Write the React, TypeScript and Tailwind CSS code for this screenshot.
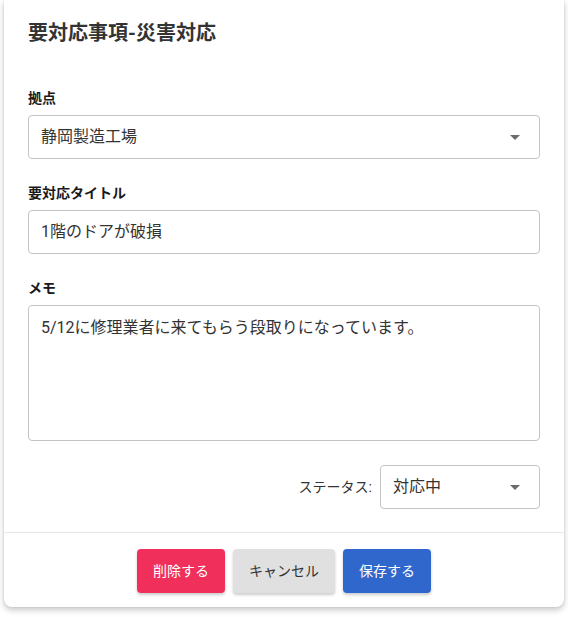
import React from 'react';

function Caret() {
  return (
    <svg width="10" height="5" viewBox="0 0 10 5" className="shrink-0">
      <path d="M0 0 L10 0 L5 5 Z" fill="#6b6b6b" />
    </svg>
  );
}

function SelectBox({ value, className }: { value: string; className?: string }) {
  return (
    <div
      className={`flex items-center justify-between h-[44px] border border-[#c4c4c4] rounded-[4px] pl-[12px] pr-[19px] text-[16px] text-[#333] ${className ?? ''}`}
    >
      <span>{value}</span>
      <Caret />
    </div>
  );
}

function Field({ label, children }: { label: string; children: React.ReactNode }) {
  return (
    <div className="mb-[24px]">
      <div className="h-[20px] leading-[20px] text-[14px] font-bold text-[#1a1a1a] mb-[7px]">{label}</div>
      {children}
    </div>
  );
}

export default function App() {
  return (
    <div
      className="w-[568px] h-[617px] bg-white px-[4px] overflow-hidden"
      style={{ fontFamily: 'Roboto, "Noto Sans CJK JP", sans-serif' }}
    >
      <div className="w-[560px] bg-white rounded-b-[8px] shadow-[0_3px_6px_rgba(0,0,0,0.22),0_0_2px_rgba(0,0,0,0.12)]">
        <div className="px-[24px] pt-[19px]">
          <h1 className="h-[28px] leading-[28px] text-[20px] font-bold text-[#333] mb-[41px]">要対応事項-災害対応</h1>

          <Field label="拠点">
            <SelectBox value="静岡製造工場" />
          </Field>

          <Field label="要対応タイトル">
            <div className="flex items-center h-[44px] border border-[#c4c4c4] rounded-[4px] px-[12px] text-[16px] text-[#333]">
              1階のドアが破損
            </div>
          </Field>

          <Field label="メモ">
            <div className="h-[136px] border border-[#c4c4c4] rounded-[4px] px-[12px] pt-[10px] text-[16px] leading-[24px] text-[#333]">
              5/12に修理業者に来てもらう段取りになっています。
            </div>
          </Field>

          <div className="flex items-center justify-end gap-[8px] mb-[23px]">
            <span className="text-[14px] text-[#333]">ステータス:</span>
            <SelectBox value="対応中" className="w-[160px]" />
          </div>
        </div>

        <div className="border-t border-[#e6e6e6] flex justify-center gap-[8px] pt-[16px] pb-[14px]">
          <button className="h-[44px] w-[88px] rounded-[4px] bg-[#f0305a] text-white text-[14px] shadow-[0_2px_3px_rgba(0,0,0,0.2)]">
            削除する
          </button>
          <button className="h-[44px] w-[102px] rounded-[4px] bg-[#e0e0e0] text-[#333] text-[14px] shadow-[0_2px_3px_rgba(0,0,0,0.2)]">
            キャンセル
          </button>
          <button className="h-[44px] w-[88px] rounded-[4px] bg-[#2f67cc] text-white text-[14px] shadow-[0_2px_3px_rgba(0,0,0,0.2)]">
            保存する
          </button>
        </div>
      </div>
    </div>
  );
}
